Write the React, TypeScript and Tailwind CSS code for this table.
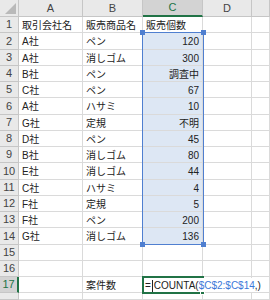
import React from 'react'

type Row = {
  n: number
  h: string
  a?: string
  b?: string
  c?: string
}

const rows: Row[] = [
  { n: 1, h: 'h-[16px]', a: '取引会社名', b: '販売商品名', c: '販売個数' },
  { n: 2, h: 'h-[17px]', a: 'A社', b: 'ペン', c: '120' },
  { n: 3, h: 'h-[16px]', a: 'A社', b: '消しゴム', c: '300' },
  { n: 4, h: 'h-[16px]', a: 'B社', b: 'ペン', c: '調査中' },
  { n: 5, h: 'h-[16px]', a: 'C社', b: 'ペン', c: '67' },
  { n: 6, h: 'h-[17px]', a: 'A社', b: 'ハサミ', c: '10' },
  { n: 7, h: 'h-[16px]', a: 'G社', b: '定規', c: '不明' },
  { n: 8, h: 'h-[16px]', a: 'D社', b: 'ペン', c: '45' },
  { n: 9, h: 'h-[16px]', a: 'B社', b: '消しゴム', c: '80' },
  { n: 10, h: 'h-[17px]', a: 'E社', b: '消しゴム', c: '44' },
  { n: 11, h: 'h-[16px]', a: 'C社', b: 'ハサミ', c: '4' },
  { n: 12, h: 'h-[16px]', a: 'F社', b: '定規', c: '5' },
  { n: 13, h: 'h-[16px]', a: 'F社', b: 'ペン', c: '200' },
  { n: 14, h: 'h-[17px]', a: 'G社', b: '消しゴム', c: '136' },
  { n: 15, h: 'h-[16px]' },
  { n: 16, h: 'h-[16px]' },
  { n: 17, h: 'h-[16px]', b: '案件数' },
  { n: 18, h: 'h-[7px]' },
]

const cell = 'shrink-0 border-r border-b border-[#dadada] overflow-hidden whitespace-nowrap px-[3px] pt-[2px] leading-none flex items-center'
const head = 'shrink-0 border-r border-b border-[#c6c6c6] bg-[#e9e9e9] text-[#444] flex items-center justify-center'

export default function App() {
  return (
    <div
      className="relative w-[270px] h-[300px] overflow-hidden bg-white text-[10px] text-[#222]"
      style={{ fontFamily: '"Liberation Sans", "Noto Sans CJK JP", sans-serif' }}
    >
      <div className="flex h-[17px] text-[11px]">
        <div className={`${head} w-[19px] relative`}>
          <div className="absolute right-[2px] bottom-[2px] w-0 h-0 border-l-[11px] border-l-transparent border-b-[11px] border-b-[#b9b9b9]" />
        </div>
        <div className={`${head} w-[64px]`}>A</div>
        <div className={`${head} w-[60px]`}>B</div>
        <div className="shrink-0 w-[60px] border-r border-[#c6c6c6] border-b-2 border-b-[#217346] bg-[#d3d3d3] text-[#217346] flex items-center justify-center">
          C
        </div>
        <div className={`${head} w-[49px]`}>D</div>
        <div className={`${head} flex-1`} />
      </div>

      {rows.map((r) => {
        const sel = r.n >= 2 && r.n <= 14
        const active = r.n === 17
        return (
          <div key={r.n} className={`flex ${r.h}`}>
            <div
              className={
                active
                  ? 'shrink-0 w-[19px] text-[11px] border-b border-[#c6c6c6] border-r-2 border-r-[#217346] bg-[#d3d3d3] text-[#217346] flex items-center justify-center'
                  : `${head} w-[19px] text-[11px]`
              }
            >
              {r.n < 18 ? r.n : ''}
            </div>
            <div className={`${cell} w-[64px]`}>{r.a}</div>
            <div className={`${cell} w-[60px]`}>{r.b}</div>
            <div className={`${cell} w-[60px] ${sel ? 'bg-[#dde7f4] justify-end' : ''}`}>{r.c}</div>
            <div className={`${cell} w-[49px]`} />
            <div className={`${cell} flex-1`} />
          </div>
        )
      })}

      {/* selection C2:C14 */}
      <div className="absolute left-[142px] top-[32px] w-[62px] h-[213px] border-[1.5px] border-[#4f7fd0] pointer-events-none">
        <div className="absolute -left-[3px] -top-[3px] w-[5px] h-[5px] bg-[#4f7fd0]" />
        <div className="absolute -right-[3px] -top-[3px] w-[5px] h-[5px] bg-[#4f7fd0]" />
        <div className="absolute -left-[3px] -bottom-[3px] w-[5px] h-[5px] bg-[#4f7fd0]" />
        <div className="absolute -right-[3px] -bottom-[3px] w-[5px] h-[5px] bg-[#4f7fd0]" />
      </div>

      {/* active cell C17 in edit mode */}
      <div className="absolute left-[142px] top-[276px] w-[62px] h-[18px] border-2 border-[#217346] bg-white">
        <div className="absolute -right-[3px] -bottom-[3px] w-[5px] h-[5px] bg-[#217346] border border-white" />
      </div>
      <div className="absolute left-[145px] top-[278px] h-[14px] pt-[2px] flex items-center whitespace-nowrap bg-white pr-[3px] leading-none text-[10px]">
        <span>=</span>
        <span className="w-px h-[12px] bg-[#222] mx-[1px]" />
        <span>COUNTA(</span>
        <span className="text-[#3c78d8]">$C$2:$C$14</span>
        <span>,)</span>
      </div>
    </div>
  )
}
